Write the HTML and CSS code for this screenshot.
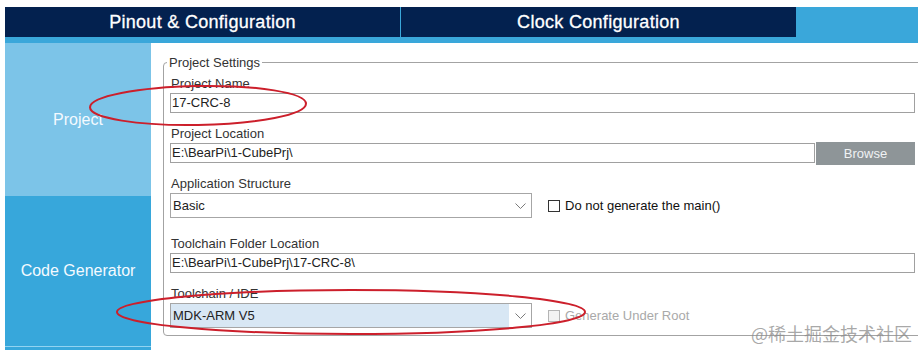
FILE: index.html
```html
<html>
    <head>
        <title>Project Manager</title>
        <link rel="stylesheet" href="styles.css">
    </head>
    <body>
        <div class="page">
            <header class="tabs">
                <div class="tab">Pinout &amp; Configuration</div>
                <div class="tab">Clock Configuration</div>
            </header>
            <div class="workspace">
                <nav class="side">
                    <div class="side-item side-project">Project</div>
                    <div class="side-item side-code">Code Generator</div>
                    <div class="side-item side-more"></div>
                </nav>
                <main class="content">
                    <fieldset class="settings">
                        <legend>Project Settings</legend>

                        <div class="field">
                            <label class="field-label">Project Name</label>
                            <div class="text-box">17-CRC-8</div>
                        </div>

                        <div class="field">
                            <label class="field-label">Project Location</label>
                            <div class="row">
                                <div class="text-box grow">E:\BearPi\1-CubePrj\</div>
                                <button class="browse">Browse</button>
                            </div>
                        </div>

                        <div class="field">
                            <label class="field-label">Application Structure</label>
                            <div class="row">
                                <div class="select">
                                    <span class="select-value">Basic</span>
                                    <span class="select-arrow">
                                        <svg width="11" height="6" viewBox="0 0 11 6"><polyline points="0.5,0.5 5.5,5.5 10.5,0.5" fill="none" stroke="#7a7a7a" stroke-width="1"/></svg>
                                    </span>
                                </div>
                                <span class="check"></span>
                                <span class="check-label">Do not generate the main()</span>
                            </div>
                        </div>

                        <div class="field field-gap">
                            <label class="field-label">Toolchain Folder Location</label>
                            <div class="text-box">E:\BearPi\1-CubePrj\17-CRC-8\</div>
                        </div>

                        <div class="field">
                            <label class="field-label">Toolchain / IDE</label>
                            <div class="row">
                                <div class="select">
                                    <span class="select-value selected">MDK-ARM V5</span>
                                    <span class="select-arrow">
                                        <svg width="11" height="6" viewBox="0 0 11 6"><polyline points="0.5,0.5 5.5,5.5 10.5,0.5" fill="none" stroke="#7a7a7a" stroke-width="1"/></svg>
                                    </span>
                                </div>
                                <span class="check disabled"></span>
                                <span class="check-label disabled">Generate Under Root</span>
                            </div>
                        </div>
                    </fieldset>
                </main>
            </div>

            <!-- red marks drawn over the screenshot -->
            <svg class="marks" width="918" height="350" viewBox="0 0 918 350">
                <ellipse cx="198" cy="105.5" rx="108" ry="19.5" transform="rotate(-1 198 105.5)" fill="none" stroke="#cc1f2b" stroke-width="2"/>
                <ellipse cx="351" cy="312" rx="234" ry="22" fill="none" stroke="#cc1f2b" stroke-width="2"/>
            </svg>
            <div class="watermark">@稀土掘金技术社区</div>
        </div>
    </body>
</html>
```

FILE: styles.css
```css
html, body {
    margin: 0;
    overflow: hidden;
}
body {
    width: 918px;
    height: 350px;
    background: #fff;
    font-family: "Liberation Sans", Arial, sans-serif;
}
.page {
    position: relative;
    height: 343px;
    padding: 7px 0 0 5px;
    overflow: hidden;
}

/* top tabs */
.tabs {
    display: flex;
    height: 36px;
    background: #3aa7da;
}
.tab {
    width: 395px;
    height: 30px;
    display: flex;
    align-items: center;
    justify-content: center;
    background: #03214f;
    color: #fff;
    font-size: 18px;
    letter-spacing: 0.3px;
    -webkit-text-stroke: 0.3px #fff;
}
.tab + .tab {
    margin-left: 1px;
}

.workspace {
    display: flex;
    height: 307px;
}

/* left menu */
.side {
    width: 146px;
    display: flex;
    flex-direction: column;
}
.side-item {
    display: flex;
    align-items: center;
    justify-content: center;
    color: #f4faff;
    font-size: 16px;
}
.side-project {
    height: 153px;
    background: #7cc4e8;
}
.side-code {
    height: 150px;
    background: #37a7db;
    border-bottom: 1px solid #92d3f1;
}
.side-more {
    flex: 1;
    background: #37a7db;
}

/* settings */
.content {
    flex: 1;
    padding: 12px 0 0 12px;
}
.settings {
    margin: 0 -20px 0 0;
    padding: 0 22px 7px 6px;
    border: 1px solid #a3a3a3;
    border-radius: 4px;
}
.settings legend {
    margin-left: -3px;
    padding: 0 2px;
    font-size: 13px;
    line-height: 15px;
    color: #333;
}
.field-label {
    display: block;
    margin: 13px 0 2px 1px;
    font-size: 13px;
    line-height: 15px;
    color: #333;
}
.field:first-of-type .field-label {
    margin-top: 6px;
}
.field-gap .field-label {
    margin-top: 18px;
}
.text-box {
    box-sizing: border-box;
    height: 20px;
    padding: 0 1px;
    border: 1px solid #a0a0a0;
    font-size: 13px;
    line-height: 18px;
    color: #222;
}
.row {
    display: flex;
    align-items: center;
}
.grow {
    flex: 1;
}
.browse {
    box-sizing: border-box;
    width: 99px;
    height: 23px;
    margin: -1px 0 -2px 1px;
    border: none;
    background: #8e9598;
    color: #f0f2f4;
    font-family: "Liberation Sans", Arial, sans-serif;
    font-size: 13px;
}
.select {
    box-sizing: border-box;
    display: flex;
    width: 362px;
    height: 25px;
    border: 1px solid #a6a6a6;
    background: #fff;
}
.select-value {
    flex: 1;
    padding-left: 2px;
    font-size: 13px;
    line-height: 23px;
    color: #222;
}
.select-value.selected {
    background: #d8e7f4;
}
.select-arrow {
    width: 22px;
    display: flex;
    align-items: center;
    justify-content: center;
}
.check {
    box-sizing: border-box;
    width: 12px;
    height: 12px;
    margin-left: 16px;
    border: 1px solid #333;
    background: #fff;
}
.check.disabled {
    border-color: #b4b4b4;
    background: #f2f2f2;
}
.check-label {
    margin-left: 5px;
    font-size: 13px;
    color: #111;
}
.check-label.disabled {
    color: #a9a9a9;
}

/* annotation overlay */
.marks {
    position: absolute;
    top: 0;
    left: 0;
    pointer-events: none;
}
.watermark {
    position: absolute;
    top: 323px;
    right: 6px;
    font-family: "Noto Sans CJK SC", sans-serif;
    font-size: 18px;
    line-height: 20px;
    color: rgba(140, 140, 140, 0.75);
}
```
